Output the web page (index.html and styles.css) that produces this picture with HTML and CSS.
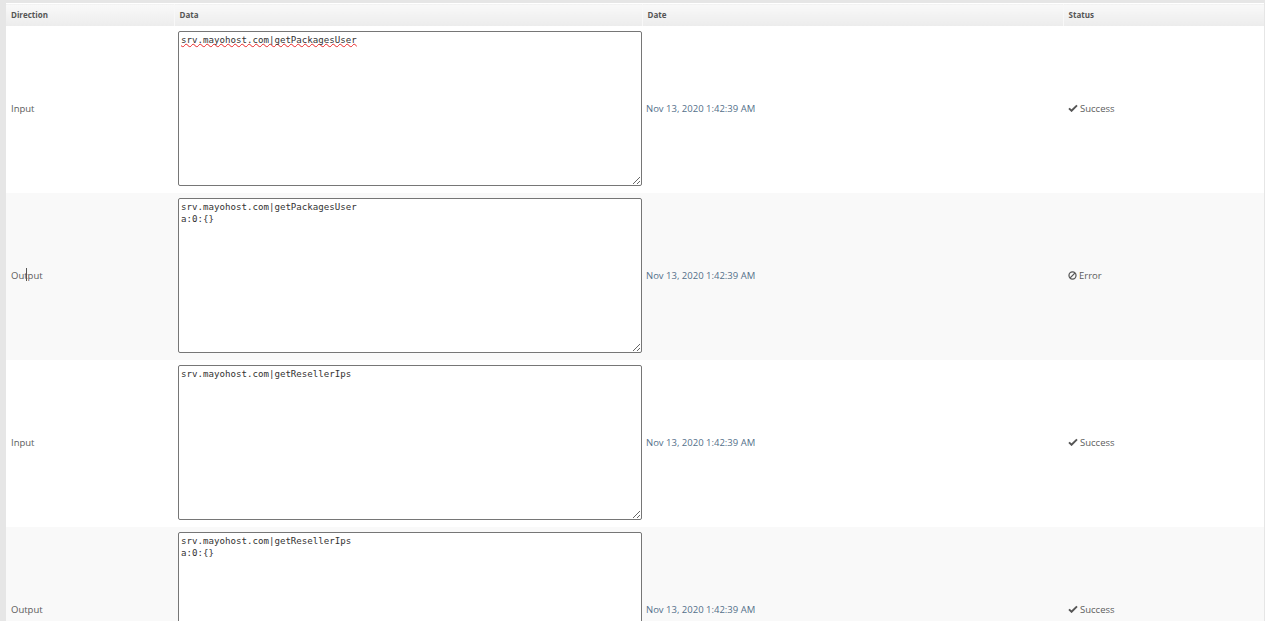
FILE: index.html
```html
<!DOCTYPE html>
<html lang="en">
<head>
<meta charset="utf-8">
<title>Module Log</title>
<link rel="stylesheet" href="styles.css">
</head>
<body>
<table class="log">
  <colgroup><col class="c-dir"><col class="c-data"><col class="c-date"><col class="c-status"></colgroup>
  <thead>
    <tr><th>Direction</th><th>Data</th><th>Date</th><th>Status</th></tr>
  </thead>
  <tbody>
    <tr>
      <td>Input</td>
      <td class="data"><textarea class="box spell" spellcheck="false">srv.mayohost.com|getPackagesUser</textarea></td>
      <td class="date">Nov 13, 2020 1:42:39 AM</td>
      <td class="status"><svg class="ico" viewBox="0 0 12 10"><path d="M1 5.5 L4.2 8.5 L11 1.8" fill="none" stroke="#555" stroke-width="2.4"/></svg>Success</td>
    </tr>
    <tr>
      <td><span class="caret-wrap">Output<i class="caret"></i></span></td>
      <td class="data"><textarea class="box" spellcheck="false">srv.mayohost.com|getPackagesUser
a:0:{}</textarea></td>
      <td class="date">Nov 13, 2020 1:42:39 AM</td>
      <td class="status"><svg class="ico ico-err" viewBox="0 0 10 10"><circle cx="5" cy="5" r="3.9" fill="none" stroke="#555" stroke-width="1.4"/><path d="M2.4 7.6 L7.6 2.4" stroke="#555" stroke-width="1.4"/></svg>Error</td>
    </tr>
    <tr>
      <td>Input</td>
      <td class="data"><textarea class="box" spellcheck="false">srv.mayohost.com|getResellerIps</textarea></td>
      <td class="date">Nov 13, 2020 1:42:39 AM</td>
      <td class="status"><svg class="ico" viewBox="0 0 12 10"><path d="M1 5.5 L4.2 8.5 L11 1.8" fill="none" stroke="#555" stroke-width="2.4"/></svg>Success</td>
    </tr>
    <tr>
      <td>Output</td>
      <td class="data"><textarea class="box" spellcheck="false">srv.mayohost.com|getResellerIps
a:0:{}</textarea></td>
      <td class="date">Nov 13, 2020 1:42:39 AM</td>
      <td class="status"><svg class="ico" viewBox="0 0 12 10"><path d="M1 5.5 L4.2 8.5 L11 1.8" fill="none" stroke="#555" stroke-width="2.4"/></svg>Success</td>
    </tr>
  </tbody>
</table>
</body>
</html>
```
FILE: styles.css
```css
html, body { height: 100%; }
body {
  margin: 0;
  padding: 3px 1px 0 6px;
  box-sizing: border-box;
  background: #e6e6e6;
  overflow: hidden;
  font-family: "Open Sans", "Noto Sans", sans-serif;
  font-size: 9.5px;
  color: #5c5c5c;
}
.log {
  width: 1258px;
  table-layout: fixed;
  border-collapse: collapse;
  background: #fff;
}
.c-dir { width: 168px; }
.c-data { width: 468px; }
.c-date { width: 421px; }
.c-status { width: 201px; }
th {
  height: 22px;
  padding: 0 5px 1px;
  box-sizing: border-box;
  text-align: left;
  font-size: 8px;
  font-weight: 700;
  color: #555;
  background: linear-gradient(#f9f9f9, #ececec);
  border-top: 1px solid #fff;
  border-left: 1px solid #f8f8f8;
}
th:first-child { border-left: 0; }
td {
  height: 167px;
  padding: 0 5px 2px;
  vertical-align: middle;
  box-sizing: border-box;
}
tbody tr:nth-child(even) { background: #f9f9f9; }
td.data { padding: 5px 0 7px 4px; vertical-align: top; }
td.date { color: #54708a; padding-left: 4px; }
.box {
  display: block;
  width: 464px;
  height: 155px;
  margin: 0;
  padding: 2px;
  box-sizing: border-box;
  border: 1px solid #767676;
  border-radius: 2px;
  background: #fff;
  color: #333;
  font-family: "DejaVu Sans Mono", monospace;
  font-size: 9.15px;
  line-height: 12px;
  overflow: hidden;
}
.spell {
  text-decoration: underline wavy #e82828;
  text-decoration-thickness: 0.5px;
  text-decoration-skip-ink: none;
  text-underline-offset: 0;
}
.ico {
  width: 10px;
  height: 8px;
  margin-right: 2px;
  vertical-align: -0.5px;
}
.ico-err { width: 9px; height: 9px; margin-right: 2px; vertical-align: -1px; }
.caret-wrap { position: relative; }
.caret {
  position: absolute;
  left: 15px;
  top: -1px;
  width: 1px;
  height: 13px;
  background: #555;
}
```
